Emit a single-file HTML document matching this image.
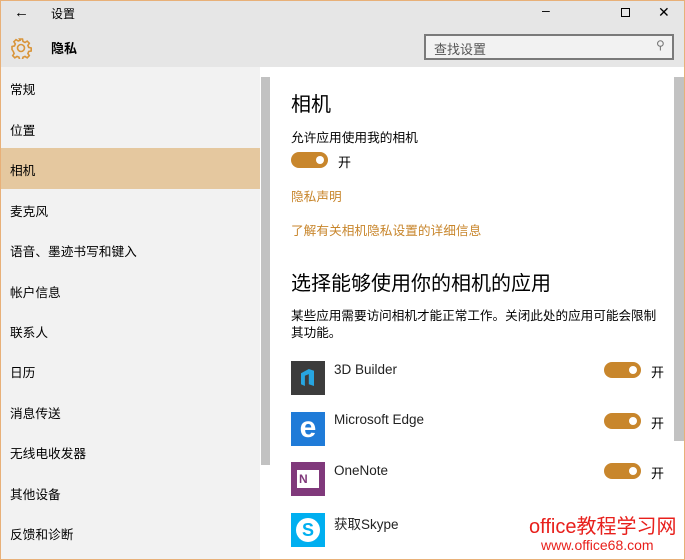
<!DOCTYPE html>
<html><head><meta charset="utf-8"><style>
*{margin:0;padding:0;box-sizing:border-box}
body{width:685px;height:560px;overflow:hidden;font-family:"Liberation Sans","Noto Sans CJK SC",sans-serif;color:#000;background:#fff;position:relative}
.frame{position:absolute;inset:0;border:1px solid #e8b078;pointer-events:none;z-index:9}
.top{position:absolute;left:0;top:0;width:685px;height:67px;background:#e6e6e6}
.left{position:absolute;left:0;top:67px;width:260px;height:493px;background:#f2f2f2}
.nav{position:absolute;left:10px;font-size:12.7px}
.sel{position:absolute;left:0;top:148px;width:260px;height:41px;background:#e5c89f}
.sb{position:absolute;background:#c2c2c2}
.t{position:absolute;white-space:nowrap}
.tog{position:absolute;width:37px;height:16px;border-radius:8px;background:#c8862c}
.tog::after{content:"";position:absolute;right:4px;top:4px;width:8px;height:8px;border-radius:50%;background:#fff}
.ic{position:absolute;left:291px;width:34px;height:34px}
.app{position:absolute;left:334px;font-size:13.5px;color:#222}
.on{position:absolute;left:651px;font-size:13px}
</style></head><body>
<div class="top"></div>
<div class="t" style="left:14px;top:4px;font-size:15px">←</div>
<div class="t" style="left:51px;top:5px;font-size:12px">设置</div>
<div class="t" style="left:542px;top:2px;font-size:14px">–</div>
<div style="position:absolute;left:621px;top:8px;width:9px;height:9px;border:1px solid #000"></div>
<div class="t" style="left:658px;top:4px;font-size:14px">✕</div>
<svg style="position:absolute;left:10px;top:37px" width="22" height="22" viewBox="0 0 22 22"><g fill="none" stroke="#d9953a" stroke-width="1.6"><circle cx="11" cy="11" r="3.5"/><path d="M9.5 2h3l.5 2.5 2 1 2.2-1.4 2.1 2.1-1.4 2.2.8 2 2.5.6v3l-2.5.5-.8 2 1.4 2.2-2.1 2.1-2.2-1.4-2 .8-.5 2.5h-3l-.5-2.5-2-.8-2.2 1.4-2.1-2.1 1.4-2.2-.8-2L2 12.5v-3l2.5-.6.8-2-1.4-2.2 2.1-2.1 2.2 1.4 2-.8z"/></g></svg>
<div class="t" style="left:51px;top:38px;font-size:13px;font-weight:bold">隐私</div>
<div style="position:absolute;left:424px;top:34px;width:250px;height:26px;border:2px solid #7a7a7a;background:#f2f2f2"></div>
<div class="t" style="left:434px;top:39px;font-size:13px;color:#555">查找设置</div>
<div class="t" style="left:656px;top:38px;font-size:12px;color:#777">⚲</div>
<div class="left"></div>
<div class="sel"></div>
<div class="nav t" style="top:79px">常规</div>
<div class="nav t" style="top:120px">位置</div>
<div class="nav t" style="top:160px">相机</div>
<div class="nav t" style="top:201px">麦克风</div>
<div class="nav t" style="top:241px">语音、墨迹书写和键入</div>
<div class="nav t" style="top:282px">帐户信息</div>
<div class="nav t" style="top:322px">联系人</div>
<div class="nav t" style="top:362px">日历</div>
<div class="nav t" style="top:403px">消息传送</div>
<div class="nav t" style="top:443px">无线电收发器</div>
<div class="nav t" style="top:484px">其他设备</div>
<div class="nav t" style="top:524px">反馈和诊断</div>
<div class="sb" style="left:261px;top:77px;width:9px;height:388px"></div>
<div class="sb" style="left:674px;top:77px;width:10px;height:364px"></div>
<div class="t" style="left:291px;top:88px;font-size:20px">相机</div>
<div class="t" style="left:291px;top:127px;font-size:12.7px">允许应用使用我的相机</div>
<div class="tog" style="left:291px;top:152px"></div>
<div class="t" style="left:338px;top:152px;font-size:13px">开</div>
<div class="t" style="left:291px;top:186px;font-size:12.7px;color:#c8862c">隐私声明</div>
<div class="t" style="left:291px;top:220px;font-size:12.7px;color:#c8862c">了解有关相机隐私设置的详细信息</div>
<div class="t" style="left:291px;top:267px;font-size:20px">选择能够使用你的相机的应用</div>
<div class="t" style="left:291px;top:308px;font-size:12.6px;line-height:17px;white-space:normal;width:380px">某些应用需要访问相机才能正常工作。关闭此处的应用可能会限制<br>其功能。</div>
<div class="ic" style="top:361px;background:#3c3c3c"><div style="position:absolute;left:10px;top:8px;width:13px;height:17px;background:#27a5e0;clip-path:polygon(0 25%,60% 0,100% 10%,100% 100%,60% 90%,60% 30%,30% 40%,30% 100%,0 90%)"></div></div>
<div class="app t" style="top:362px">3D Builder</div>
<div class="tog" style="left:604px;top:362px"></div><div class="on t" style="top:362px">开</div>
<div class="ic" style="top:412px;background:#1f7bd8;color:#fff;font-size:30px;font-weight:bold;text-align:center;line-height:32px">e</div>
<div class="app t" style="top:412px">Microsoft Edge</div>
<div class="tog" style="left:604px;top:413px"></div><div class="on t" style="top:413px">开</div>
<div class="ic" style="top:462px;background:#80397b"><div style="position:absolute;left:6px;top:8px;width:22px;height:18px;background:#fff"></div><div style="position:absolute;left:8px;top:10px;font-size:12px;font-weight:bold;color:#80397b">N</div></div>
<div class="app t" style="top:463px">OneNote</div>
<div class="tog" style="left:604px;top:463px"></div><div class="on t" style="top:463px">开</div>
<div class="ic" style="top:513px;background:#00aff0"><div style="position:absolute;left:5px;top:5px;width:24px;height:24px;border-radius:50%;background:#fff;color:#00aff0;font-weight:bold;font-size:18px;text-align:center;line-height:24px">S</div></div>
<div class="app t" style="top:513px">获取Skype</div>
<div class="t" style="left:529px;top:510px;font-size:20px;color:#e8201c">office教程学习网</div>
<div class="t" style="left:541px;top:537px;font-size:14px;color:#e8201c">www.office68.com</div>
<div class="frame"></div>
</body></html>
